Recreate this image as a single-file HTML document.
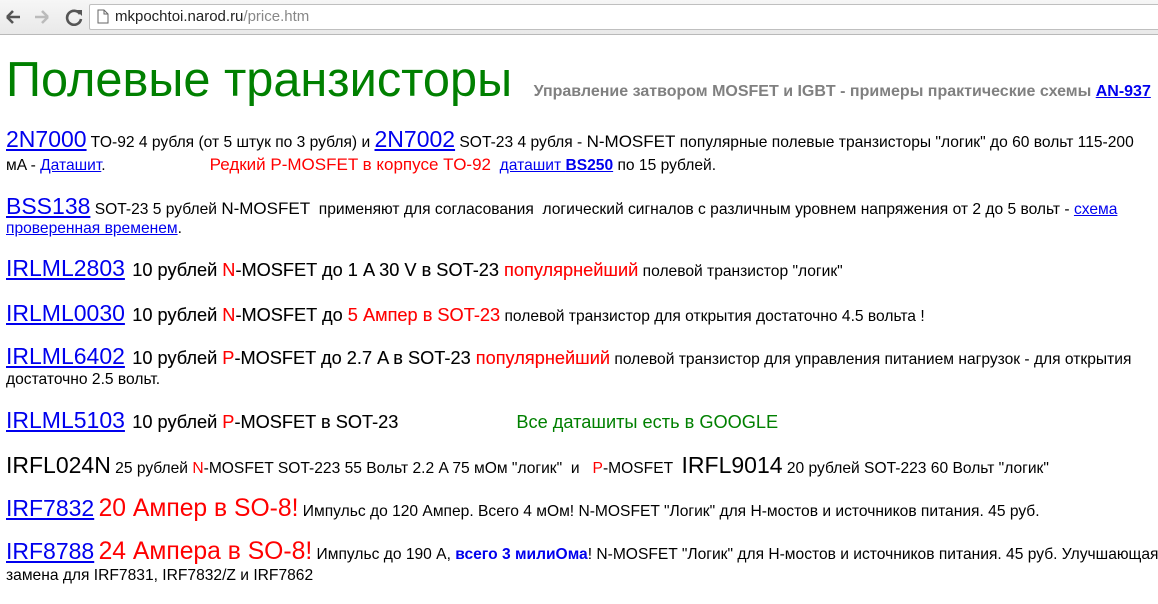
<!DOCTYPE html>
<html><head><meta charset="utf-8">
<style>
body{margin:0;width:1158px;height:604px;overflow:hidden;background:#fff;font-family:"Liberation Sans",Arial,sans-serif;position:relative}
.bar{position:absolute;left:0;top:0;width:1158px;height:34px;background:linear-gradient(#f6f6f6,#e9e9e9);border-bottom:1px solid #b9b9b9}
.url{position:absolute;left:89px;top:4px;width:1080px;height:24px;background:#fff;border:1px solid #bfbfbf;border-radius:2px;font-size:15px;line-height:24px}
.l{position:absolute;left:6px;white-space:nowrap;font-size:15.6px;color:#000;line-height:26px}
a{color:#0000ee;text-decoration:underline}
.b{font-size:23px}
.bb{font-size:24.7px}
.r{color:#f00}
.m{font-size:18.2px;margin-left:3px;-webkit-text-stroke:0.12px}
.n{font-size:17px}
</style></head><body>
<div class="bar">
<svg style="position:absolute;left:4px;top:8px" width="80" height="18"><path d="M3 9h13M3 9l6-6M3 9l6 6" stroke="#555" stroke-width="2.6" fill="none"/><path d="M31 9h13M44 9l-6-6M44 9l-6 6" stroke="#bbb" stroke-width="2.6" fill="none"/><path d="M76 6a7 7 0 1 0 1 5" stroke="#555" stroke-width="2.6" fill="none"/><path d="M72 2l6 0 0 6z" fill="#555"/></svg>
<div class="url"><svg style="position:absolute;left:7px;top:4px" width="12" height="15"><path d="M1 1h6l4 4v9H1z M7 1v4h4" stroke="#666" fill="#fff"/></svg><span style="position:absolute;left:25px;color:#222">mkpochtoi.narod.ru<span style="color:#888">/price.htm</span></span></div>
</div>
<div class="l" style="top:50px;line-height:60px;font-size:48.7px;color:#008000">Полевые транзисторы <span style="font-size:16px;color:#808080;font-weight:bold;margin-left:8px">Управление затвором MOSFET и IGBT - примеры практические схемы <a href="#" style="color:#0000ee">AN-937</a></span></div>
<div class="l" style="top:126px"><a class="b" href="#">2N7000</a> TO-92 4 рубля (от 5 штук по 3 рубля) и <a class="b" href="#">2N7002</a> SOT-23 4 рубля - <span class="n">N-MOSFET</span> популярные полевые транзисторы "логик" до 60 вольт 115-200</div>
<div class="l" style="top:152px">мA - <a href="#">Даташит</a>.<span class="r n" style="margin-left:104px">Редкий P-MOSFET в корпусе TO-92</span> &nbsp;<a href="#">даташит <b>BS250</b></a> по 15 рублей.</div>
<div class="l" style="top:193px"><a class="b" href="#">BSS138</a> SOT-23 5 рублей <span class="n">N-MOSFET</span> &nbsp;применяют для согласования &nbsp;логический сигналов с различным уровнем напряжения от 2 до 5 вольт - <a href="#">схема</a></div>
<div class="l" style="top:216px"><a href="#">проверенная временем</a>.</div>
<div class="l" style="top:255px"><a class="b" href="#">IRLML2803</a> <span class="m">10 рублей <span class="r">N</span>-MOSFET до 1 A 30 V в SOT-23 <span class="r">популярнейший</span></span> полевой транзистор "логик"</div>
<div class="l" style="top:300px"><a class="b" href="#">IRLML0030</a> <span class="m">10 рублей <span class="r">N</span>-MOSFET до <span class="r">5 Ампер в SOT-23</span></span> полевой транзистор для открытия достаточно 4.5 вольта !</div>
<div class="l" style="top:343px"><a class="b" href="#">IRLML6402</a> <span class="m">10 рублей <span class="r">P</span>-MOSFET до 2.7 A в SOT-23 <span class="r">популярнейший</span></span> полевой транзистор для управления питанием нагрузок - для открытия</div>
<div class="l" style="top:367px">достаточно 2.5 вольт.</div>
<div class="l" style="top:407px"><a class="b" href="#">IRLML5103</a> <span class="m">10 рублей <span class="r">P</span>-MOSFET в SOT-23</span><span class="m" style="color:#008000;margin-left:118px;-webkit-text-stroke:0">Все даташиты есть в GOOGLE</span></div>
<div class="l" style="top:452px"><span class="b">IRFL024N</span> 25 рублей <span class="r">N</span>-MOSFET SOT-223 55 Вольт 2.2 A 75 мОм "логик" &nbsp;и &nbsp;&nbsp;<span class="r">P</span>-MOSFET &nbsp;<span class="b">IRFL9014</span> 20 рублей SOT-223 60 Вольт "логик"</div>
<div class="l" style="top:495px"><a class="b" href="#">IRF7832</a> <span class="bb r">20 Ампер в SO-8!</span> Импульс до 120 Ампер. Всего 4 мОм! N-MOSFET "Логик" для Н-мостов и источников питания. 45 руб.</div>
<div class="l" style="top:538px"><a class="b" href="#">IRF8788</a> <span class="bb r">24 Ампера в SO-8!</span> Импульс до 190 A, <b style="color:#0000ee">всего 3 милиОма</b>! N-MOSFET "Логик" для Н-мостов и источников питания. 45 руб. Улучшающая</div>
<div class="l" style="top:563px">замена для IRF7831, IRF7832/Z и IRF7862</div>
</body></html>
